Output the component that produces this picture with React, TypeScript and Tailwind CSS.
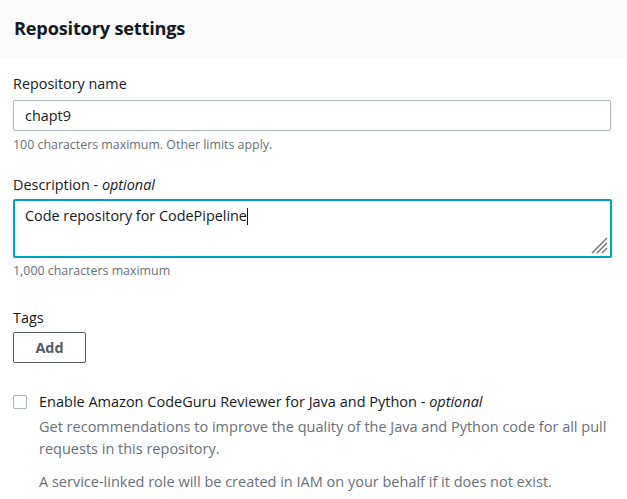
export default function App() {
  return (
    <div
      className="w-[627px] h-[499px] bg-white text-[#16191f] overflow-hidden"
      style={{ fontFamily: '"Open Sans", "Noto Sans", sans-serif' }}
    >
      {/* Header */}
      <div className="h-[57px] bg-[#fafafa] flex items-center px-[14px]">
        <h2 className="text-[18.2px] font-bold tracking-[-0.2px]">Repository settings</h2>
      </div>

      <div className="px-[13px] pt-[17px]">
        {/* Repository name */}
        <div>
          <label className="block text-[14.4px] leading-[20px] mb-[6px]">Repository name</label>
          <div className="h-[31px] w-[598px] border border-[#aab7b8] rounded-[2px] flex items-center px-[11px] text-[14.4px]">
            chapt9
          </div>
          <p className="text-[12.4px] leading-[16px] text-[#687078] mt-[6px]">
            100 characters maximum. Other limits apply.
          </p>
        </div>

        {/* Description */}
        <div className="mt-[22px]">
          <label className="block text-[14.4px] leading-[20px] mb-[4px]">
            Description - <i>optional</i>
          </label>
          <div className="relative h-[59px] w-[599px] border-2 border-[#00a1c9] rounded-[2px] px-[10px] pt-[4px] text-[14.4px]">
            Code repository for CodePipeline
            <span className="inline-block w-px h-[17px] bg-[#16191f] align-middle -mt-[2px]" />
            <svg
              className="absolute right-[1px] bottom-[1px]"
              width="20"
              height="20"
              viewBox="0 0 20 20"
              fill="none"
              stroke="#6b6b6b"
              strokeWidth="1.2"
            >
              <line x1="18" y1="3" x2="3" y2="18" />
              <line x1="18" y1="8" x2="8" y2="18" />
              <line x1="18" y1="13" x2="13" y2="18" />
            </svg>
          </div>
          <p className="text-[12.4px] leading-[16px] text-[#687078] mt-[5px]">1,000 characters maximum</p>
        </div>

        {/* Tags */}
        <div className="mt-[29px]">
          <label className="block text-[14.4px] leading-[20px] mb-[4px]">Tags</label>
          <button className="h-[31px] w-[73px] border border-[#545b64] rounded-[2px] text-[14.4px] font-bold text-[#545b64]">
            Add
          </button>
        </div>

        {/* CodeGuru */}
        <div className="mt-[28px] flex gap-[12px]">
          <div className="w-[14px] h-[14px] mt-[4px] border border-[#aab7b8] rounded-[2px] shrink-0" />
          <div className="text-[14.5px] leading-[22px]">
            <p>
              Enable Amazon CodeGuru Reviewer for Java and Python - <i>optional</i>
            </p>
            <p className="text-[#687078] mt-[3px]">
              Get recommendations to improve the quality of the Java and Python code for all pull requests in this
              repository.
            </p>
            <p className="text-[#687078] mt-[11px]">
              A service-linked role will be created in IAM on your behalf if it does not exist.
            </p>
          </div>
        </div>
      </div>
    </div>
  );
}
